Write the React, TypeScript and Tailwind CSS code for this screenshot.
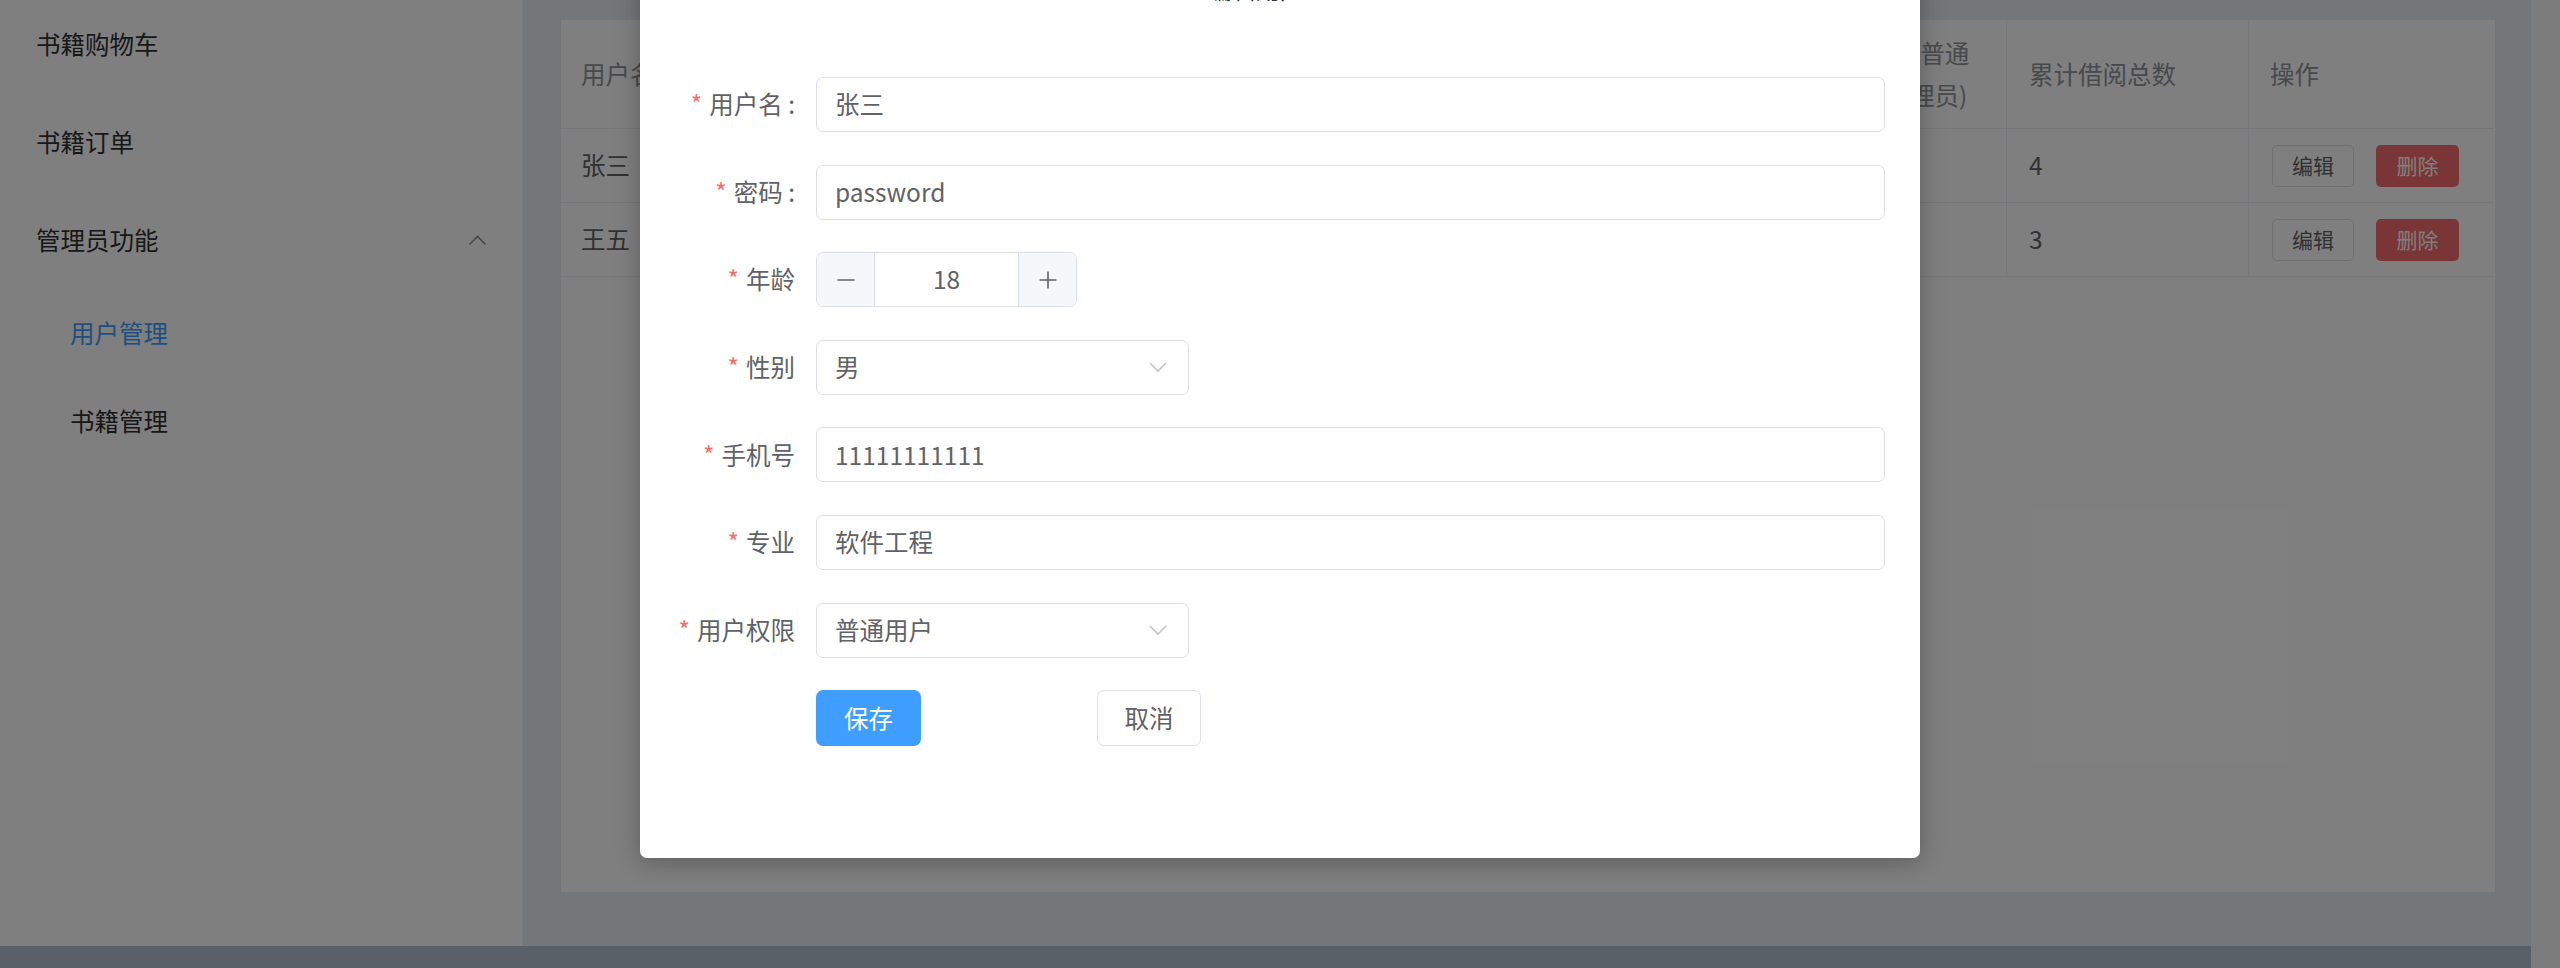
import React from "react";

const cols = "grid-cols-[230px_230px_150px_150px_250px_222px_214px_242px_245px]";

function ChevronUp() {
  return (
    <svg width="21" height="21" viewBox="0 0 21 21" fill="none">
      <polyline points="2.5,14.5 10.5,6.5 18.5,14.5" stroke="#909399" strokeWidth="1.6" />
    </svg>
  );
}

function ChevronDown() {
  return (
    <svg width="20" height="12" viewBox="0 0 20 12" fill="none">
      <polyline points="2,2 10,10 18,2" stroke="#c0c4cc" strokeWidth="1.6" />
    </svg>
  );
}

function Label({ text }: { text: string }) {
  return (
    <div className="flex w-[141px] shrink-0 items-center justify-end pr-[21px] text-[24.5px] text-[#606266]">
      <span className="mr-[7px] text-[#f56c6c]">*</span>
      <span>{text}</span>
    </div>
  );
}

function TextInput({ value }: { value: string }) {
  return (
    <div className="flex h-[55px] flex-1 items-center rounded-[7px] border border-[#dcdfe6] bg-white pl-[18px] text-[24.5px] text-[#606266]">
      {value}
    </div>
  );
}

function SelectInput({ value }: { value: string }) {
  return (
    <div className="flex h-[55px] w-[373px] items-center justify-between rounded-[7px] border border-[#dcdfe6] bg-white pl-[18px] pr-[20px] text-[24.5px] text-[#606266]">
      <span>{value}</span>
      <ChevronDown />
    </div>
  );
}

function Row({ children }: { children: React.ReactNode }) {
  return <div className="flex h-[55px] items-center">{children}</div>;
}

export default function App() {
  return (
    <div className="relative h-[968px] w-[2560px] overflow-hidden bg-white font-['Noto_Sans_CJK_SC','Noto_Sans',sans-serif]">
      <div className="flex h-full">
        <div className="flex flex-1 flex-col">
          <div className="flex min-h-0 flex-1">
            <aside className="w-[524px] shrink-0 overflow-hidden border-r border-[#e6e6e6] bg-white text-[24.5px] text-[#303133]">
              <div className="-mt-[5px] flex flex-col">
                <div className="flex h-[98px] items-center pl-[36px]">书籍购物车</div>
                <div className="flex h-[98px] items-center pl-[36px]">书籍订单</div>
                <div className="flex h-[98px] items-center justify-between pl-[36px] pr-[35px]">
                  <span>管理员功能</span>
                  <ChevronUp />
                </div>
                <div className="flex h-[88px] items-center pl-[70px] text-[#409eff]">用户管理</div>
                <div className="flex h-[88px] items-center pl-[70px]">书籍管理</div>
              </div>
            </aside>
            <main className="flex-1 bg-[#e9eef3] pb-[54px] pl-[37px] pr-[36px] pt-[20px]">
              <div className="h-full overflow-hidden bg-white text-[24.5px]">
                <div className={`grid ${cols} h-[109px] text-[#909399]`}>
                  {["用户名", "密码", "年龄", "性别", "手机号", "专业"].map((h) => (
                    <div key={h} className="flex items-center border-b border-r border-[#ebeef5] px-[20px]">
                      {h}
                    </div>
                  ))}
                  <div className="flex items-center whitespace-nowrap border-b border-r border-[#ebeef5] pl-[21px] pr-[2px] leading-[42px]">
                    <div className="flex flex-col">
                      <span>用户权限(普通</span>
                      <span className="pl-[13px]">用户/管理员)</span>
                    </div>
                  </div>
                  <div className="flex items-center border-b border-r border-[#ebeef5] px-[22px]">累计借阅总数</div>
                  <div className="flex items-center border-b border-[#ebeef5] px-[21px]">操作</div>
                </div>
                {[
                  ["张三", "password", "18", "男", "11111111111", "软件工程", "普通用户", "4"],
                  ["王五", "123456", "20", "男", "22222222222", "计算机科学", "普通用户", "3"],
                ].map((r, i) => (
                  <div key={i} className={`grid ${cols} h-[74px] text-[#606266]`}>
                    {r.map((c, j) => (
                      <div
                        key={j}
                        className={`flex items-center border-b border-r border-[#ebeef5] ${j === 7 ? "px-[22px]" : "px-[20px]"}`}
                      >
                        {c}
                      </div>
                    ))}
                    <div className="flex items-center gap-[22px] border-b border-[#ebeef5] pl-[23px]">
                      <button className="flex h-[42px] w-[82px] items-center justify-center rounded-[5px] border border-[#dcdfe6] bg-white text-[21px] text-[#606266]">
                        编辑
                      </button>
                      <button className="flex h-[42px] w-[83px] items-center justify-center rounded-[5px] bg-[#f56c6c] text-[21px] text-white">
                        删除
                      </button>
                    </div>
                  </div>
                ))}
              </div>
            </main>
          </div>
          <footer className="h-[22px] shrink-0 bg-[#b3c0d1]" />
        </div>
        <div className="w-[29px] shrink-0 bg-[#f8f8f8]" />
      </div>

      <div className="absolute inset-0 bg-black/50" />

      <div className="absolute left-[640px] top-[-27px] w-[1280px] rounded-b-[7px] bg-white pb-[112px] shadow-[0_4px_24px_rgba(0,0,0,0.28)]">
        <div className="h-[36px] overflow-hidden pl-[567px] text-[24.5px] leading-[31px] text-[#303133]">编辑用户</div>
        <div className="mt-[68px] flex flex-col gap-[32.6px] pl-[35px] pr-[35px]">
          <Row>
            <Label text="用户名 :" />
            <TextInput value="张三" />
          </Row>
          <Row>
            <Label text="密码 :" />
            <TextInput value="password" />
          </Row>
          <Row>
            <Label text="年龄" />
            <div className="flex h-[55px] w-[261px] overflow-hidden rounded-[7px] border border-[#dcdfe6] bg-white">
              <div className="flex w-[58px] items-center justify-center border-r border-[#dcdfe6] bg-[#f5f7fa]">
                <svg width="18" height="18" viewBox="0 0 18 18">
                  <line x1="0.5" y1="9" x2="17.5" y2="9" stroke="#606266" strokeWidth="1.6" />
                </svg>
              </div>
              <div className="flex flex-1 items-center justify-center text-[24.5px] text-[#606266]">18</div>
              <div className="flex w-[58px] items-center justify-center border-l border-[#dcdfe6] bg-[#f5f7fa]">
                <svg width="18" height="18" viewBox="0 0 18 18">
                  <line x1="0.5" y1="9" x2="17.5" y2="9" stroke="#606266" strokeWidth="1.6" />
                  <line x1="9" y1="0.5" x2="9" y2="17.5" stroke="#606266" strokeWidth="1.6" />
                </svg>
              </div>
            </div>
          </Row>
          <Row>
            <Label text="性别" />
            <SelectInput value="男" />
          </Row>
          <Row>
            <Label text="手机号" />
            <TextInput value="11111111111" />
          </Row>
          <Row>
            <Label text="专业" />
            <TextInput value="软件工程" />
          </Row>
          <Row>
            <Label text="用户权限" />
            <SelectInput value="普通用户" />
          </Row>
          <div className="flex h-[56px] items-center pl-[141px]">
            <button className="flex h-[56px] w-[105px] items-center justify-center rounded-[7px] bg-[#409eff] text-[24.5px] text-white">
              保存
            </button>
            <button className="ml-[176px] flex h-[56px] w-[104px] items-center justify-center rounded-[7px] border border-[#dcdfe6] bg-white text-[24.5px] text-[#606266]">
              取消
            </button>
          </div>
        </div>
      </div>
    </div>
  );
}
